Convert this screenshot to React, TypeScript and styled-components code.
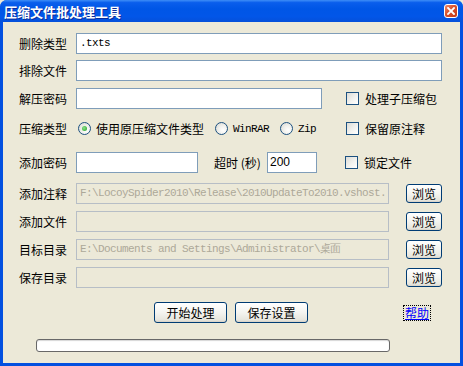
import React from 'react'
import styled, {createGlobalStyle} from 'styled-components'

const GlobalStyle = createGlobalStyle`
  html, body {
    margin: 0;
    padding: 0;
    background: #ECE9D8;
  }
  body {
    font-family: "Noto Sans CJK SC", "Liberation Sans", sans-serif;
    font-size: 12px;
    color: #000;
  }
`

const Window = styled.div`
  width: 463px;
  height: 366px;
  display: flex;
  flex-direction: column;
  background: #0350E0;
  border-radius: 7px 7px 0 0;
  overflow: hidden;
`

const TitleBar = styled.div`
  height: 22px;
  flex: none;
  display: flex;
  align-items: center;
  justify-content: space-between;
  padding: 0 5px 0 4px;
  background: linear-gradient(#3E8EF7 0%, #0A5EEC 12%, #0056E6 40%, #0256E8 75%, #0550DA 100%);
`

const Title = styled.span`
  color: #fff;
  font-weight: bold;
  font-size: 13px;
  letter-spacing: 0;
  text-shadow: 1px 1px #0B2C9A;
`

const CloseBtn = styled.div`
  width: 14px;
  height: 14px;
  box-sizing: border-box;
  border: 1px solid #fff;
  border-radius: 3px;
  background: linear-gradient(135deg, #EE8A6A 0%, #D9502B 45%, #C2391A 100%);
  display: flex;
  align-items: center;
  justify-content: center;
`

const Body = styled.div`
  flex: 1;
  margin: 0 3px 3px;
  background: #ECE9D8;
  padding: 11px 18px 0 16px;
  display: flex;
  flex-direction: column;
`

const Row = styled.div<{ $mt: number }>`
  display: flex;
  align-items: center;
  height: 21px;
  margin-top: ${({$mt}) => $mt}px;
`

const Label = styled.span<{ $w?: number }>`
  width: ${({$w}) => $w ?? 57}px;
  flex: none;
  white-space: nowrap;
`

const TextBox = styled.div<{ $w?: number; $disabled?: boolean }>`
  ${({$w}) => $w ? `width: ${$w}px; flex: none;` : 'flex: 1;'}
  height: 21px;
  box-sizing: border-box;
  border: 1px solid ${({$disabled}) => $disabled ? '#B7BEC6' : '#7F9DB9'};
  background: ${({$disabled}) => $disabled ? '#ECE9D8' : '#fff'};
  color: ${({$disabled}) => $disabled ? '#ACA899' : '#000'};
  font-family: "Liberation Mono", monospace;
  font-size: 11px;
  letter-spacing: -0.6px;
  line-height: 19px;
  padding: 0 3px;
  white-space: nowrap;
  overflow: hidden;
`

const NumberBox = styled(TextBox)`
  font-family: "Liberation Sans", sans-serif;
  font-size: 12px;
  letter-spacing: 0;
  padding: 0 2px;
`

const Gap = styled.span<{ $w: number }>`
  width: ${({$w}) => $w}px;
  flex: none;
`

const Check = styled.label`
  display: flex;
  align-items: center;
  gap: 6px;
  white-space: nowrap;
`

const CheckBox = styled.span`
  width: 13px;
  height: 13px;
  box-sizing: border-box;
  border: 1px solid #1C5180;
  background: linear-gradient(135deg, #DCDCD7 0%, #F4F4F1 60%, #fff 100%);
`

const RadioGroup = styled.div`
  width: 270px;
  flex: none;
  display: flex;
  align-items: center;
  padding-left: 2px;
  box-sizing: border-box;
`

const RadioItem = styled.label<{ $mono?: boolean }>`
  display: flex;
  align-items: center;
  gap: 5px;
  margin-right: 11px;
  white-space: nowrap;
  font-family: ${({$mono}) => $mono ? '"Liberation Mono", monospace' : 'inherit'};
  font-size: ${({$mono}) => $mono ? '11px' : '12px'};
  letter-spacing: ${({$mono}) => $mono ? '-0.6px' : '0'};
`

const RadioDot = styled.span<{ $on?: boolean }>`
  width: 13px;
  height: 13px;
  box-sizing: border-box;
  border-radius: 50%;
  border: 1px solid #1C5180;
  background: radial-gradient(circle at 65% 65%, #fff 0%, #F0F0EC 45%, #D4D4CE 100%);
  display: flex;
  align-items: center;
  justify-content: center;

  &::after {
    content: '';
    display: ${({$on}) => $on ? 'block' : 'none'};
    width: 5px;
    height: 5px;
    border-radius: 50%;
    background: radial-gradient(circle at 40% 40%, #8CE08C, #21A121);
  }
`

const Browse = styled.button`
  width: 36px;
  height: 19px;
  flex: none;
  margin-left: 17px;
  padding: 0;
  box-sizing: border-box;
  border: 1px solid #003C74;
  border-radius: 3px;
  background: linear-gradient(#FFFFFF 0%, #F4F4F0 50%, #E6E5DD 90%, #D6D0C5 100%);
  font-family: "Noto Sans CJK SC", sans-serif;
  font-size: 12px;
  line-height: 17px;
  color: #000;
`

const ActionRow = styled.div`
  display: flex;
  align-items: center;
  height: 21px;
  margin-top: 14px;
  padding-left: 135px;
  padding-right: 12px;
  gap: 8px;
`

const ActionBtn = styled(Browse)`
  width: 73px;
  height: 21px;
  margin-left: 0;
  line-height: 19px;
`

const Help = styled.a`
  margin-left: auto;
  color: #0000FF;
  text-decoration: underline;
  outline: 1px dotted #000;
  outline-offset: 0;
  padding: 0 1px;
  line-height: 14px;
  cursor: pointer;
`

const Progress = styled.div`
  margin: 16px 0 0 17px;
  width: 354px;
  height: 13px;
  box-sizing: border-box;
  border: 1px solid #686868;
  border-radius: 3px;
  background: #fff;
  box-shadow: inset 0 1px 1px #D6D6D6;
`

const FileRow = ({label, value, mt}: { label: string; value?: string; mt: number }) => (
  <Row $mt={mt}>
    <Label>{label}</Label>
    <TextBox $w={313} $disabled>{value}</TextBox>
    <Browse>浏览</Browse>
  </Row>
)

export default function App() {
  return (
    <>
      <GlobalStyle/>
      <Window>
        <TitleBar>
          <Title>压缩文件批处理工具</Title>
          <CloseBtn>
            <svg width="8" height="8" viewBox="0 0 8 8">
              <path d="M1 1 L7 7 M7 1 L1 7" stroke="#fff" strokeWidth="1.8" strokeLinecap="square"/>
            </svg>
          </CloseBtn>
        </TitleBar>
        <Body>
          <Row $mt={0}>
            <Label>删除类型</Label>
            <TextBox>.txts</TextBox>
          </Row>
          <Row $mt={6}>
            <Label>排除文件</Label>
            <TextBox/>
          </Row>
          <Row $mt={7}>
            <Label>解压密码</Label>
            <TextBox $w={246}/>
            <Gap $w={24}/>
            <Check><CheckBox/>处理子压缩包</Check>
          </Row>
          <Row $mt={9}>
            <Label>压缩类型</Label>
            <RadioGroup>
              <RadioItem><RadioDot $on/>使用原压缩文件类型</RadioItem>
              <RadioItem $mono><RadioDot/>WinRAR</RadioItem>
              <RadioItem $mono><RadioDot/>Zip</RadioItem>
            </RadioGroup>
            <Check><CheckBox/>保留原注释</Check>
          </Row>
          <Row $mt={13}>
            <Label>添加密码</Label>
            <TextBox $w={122}/>
            <Gap $w={16}/>
            <Label $w={53}>超时 (秒)</Label>
            <NumberBox $w={50}>200</NumberBox>
            <Gap $w={28}/>
            <Check><CheckBox/>锁定文件</Check>
          </Row>
          <FileRow mt={10} label="添加注释" value="F:\LocoySpider2010\Release\2010UpdateTo2010.vshost."/>
          <FileRow mt={7} label="添加文件"/>
          <FileRow mt={7} label="目标目录" value="E:\Documents and Settings\Administrator\桌面"/>
          <FileRow mt={7} label="保存目录"/>
          <ActionRow>
            <ActionBtn>开始处理</ActionBtn>
            <ActionBtn>保存设置</ActionBtn>
            <Help>帮助</Help>
          </ActionRow>
          <Progress/>
        </Body>
      </Window>
    </>
  )
}
